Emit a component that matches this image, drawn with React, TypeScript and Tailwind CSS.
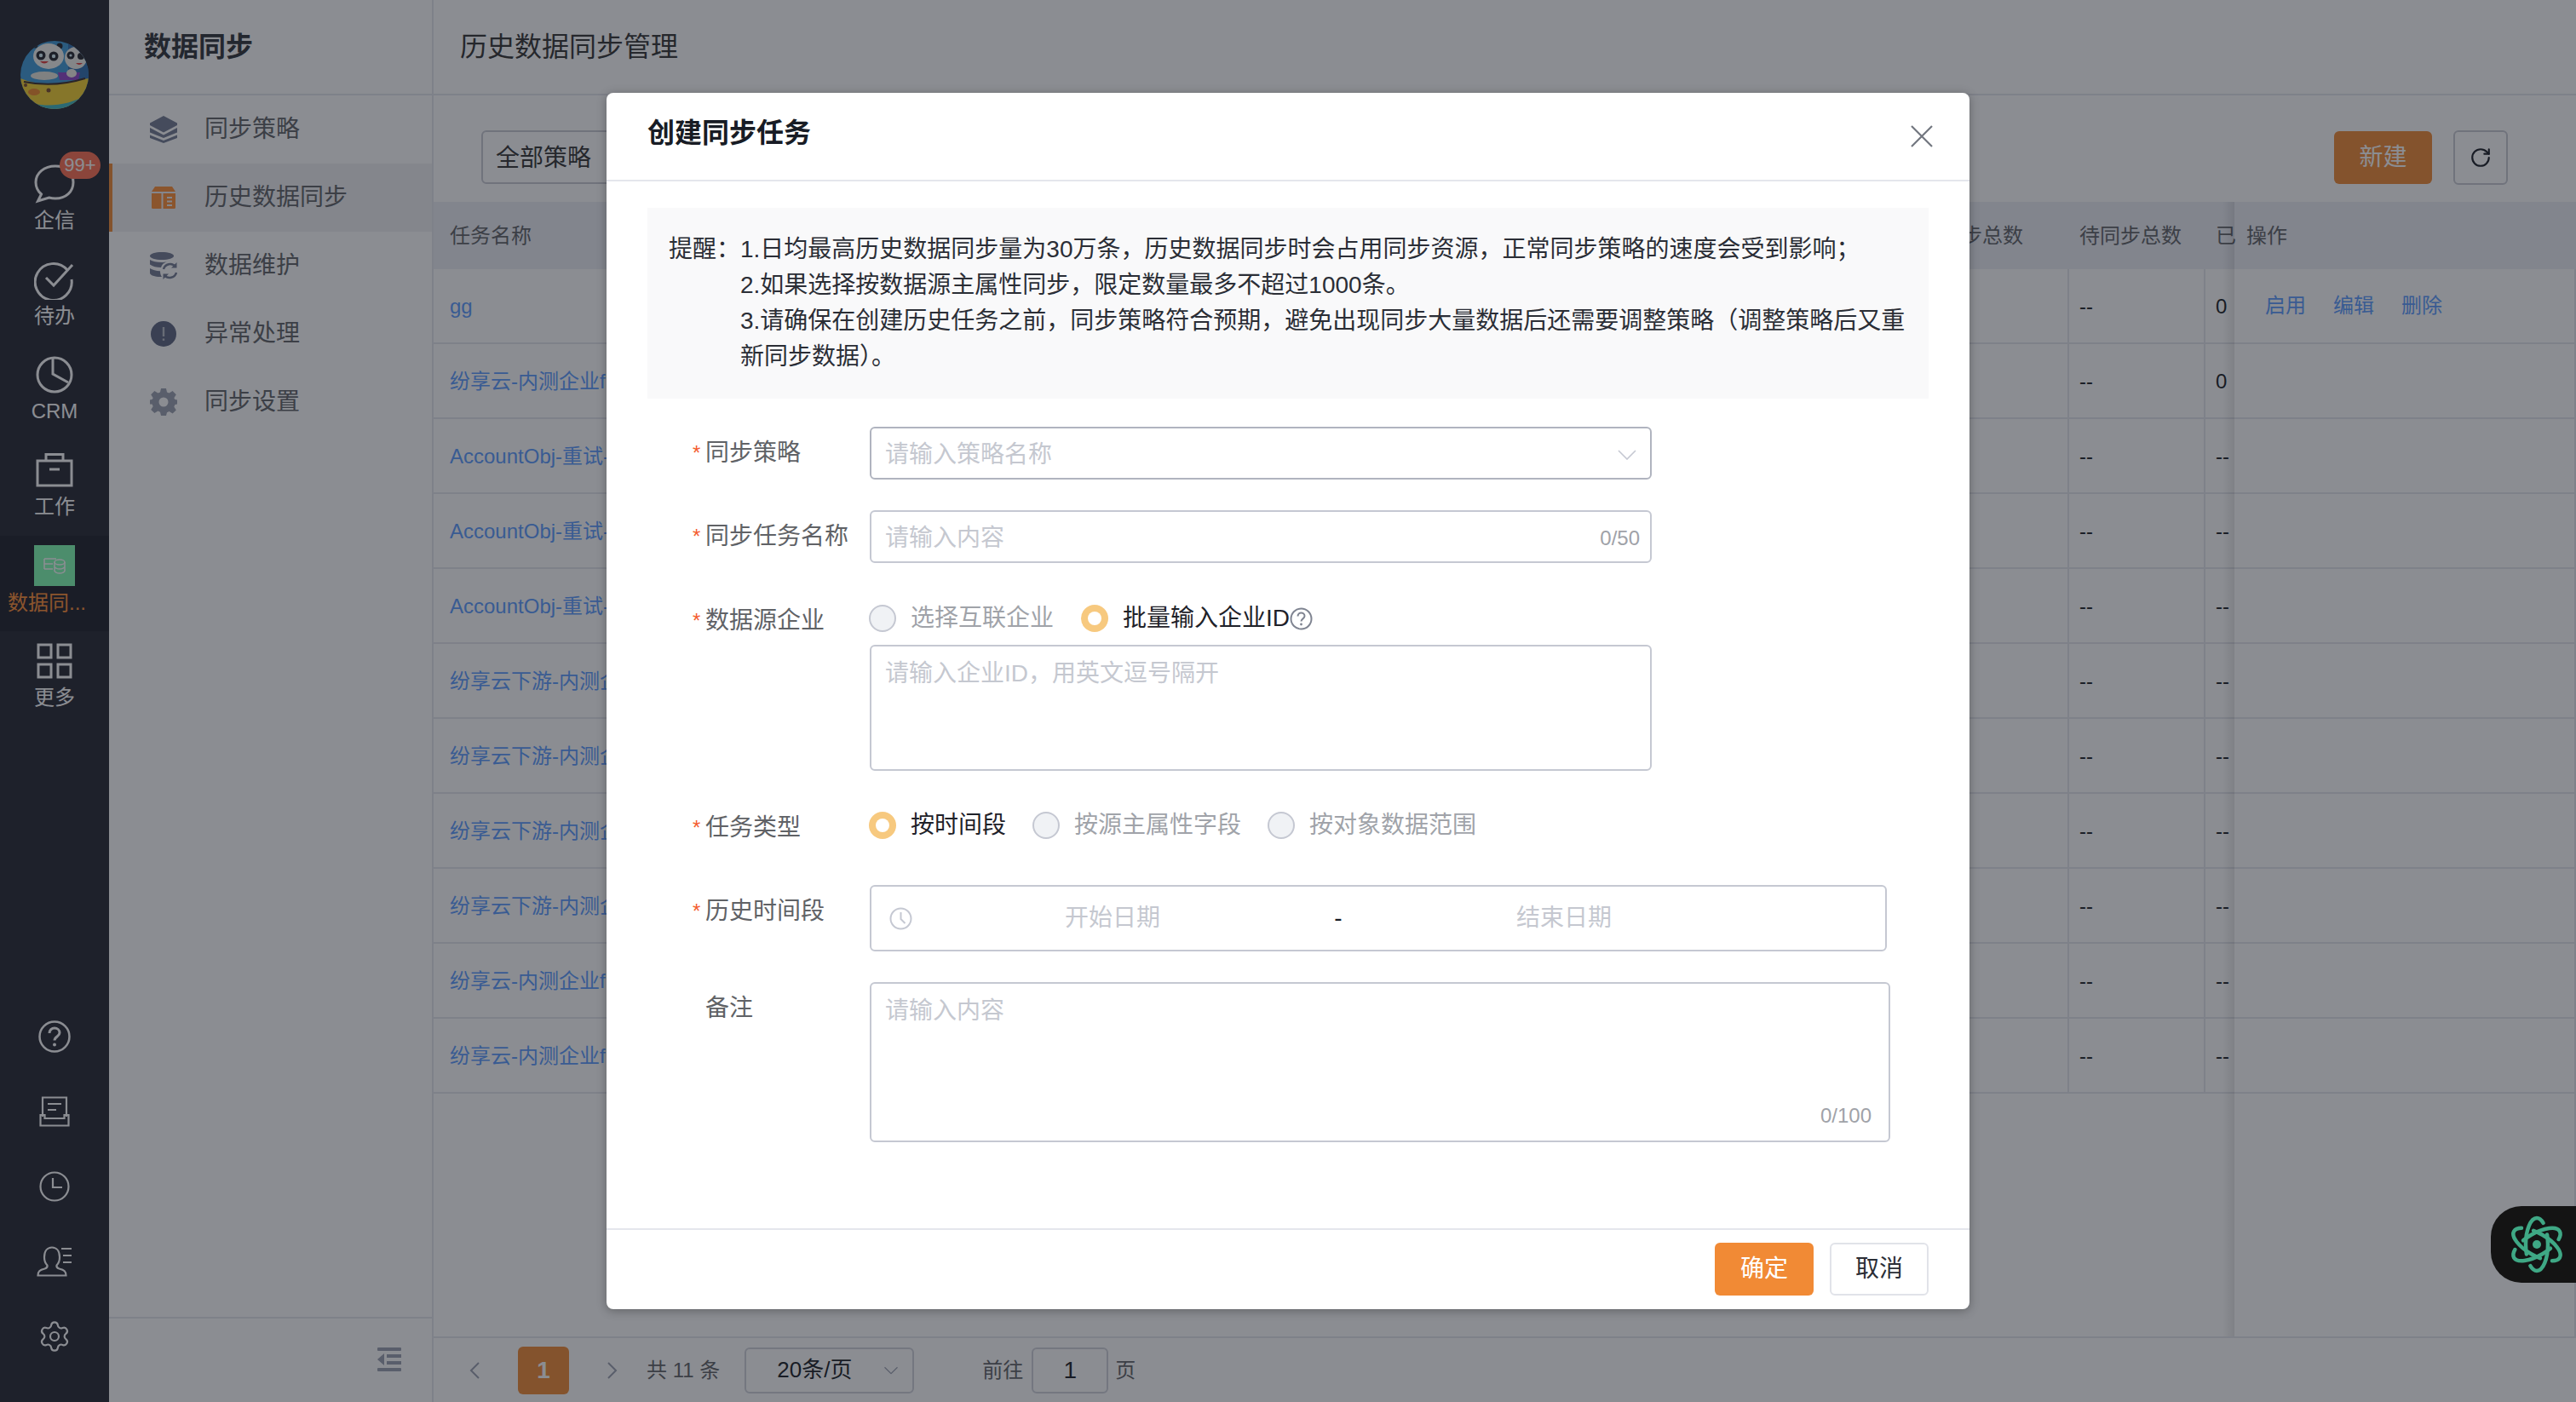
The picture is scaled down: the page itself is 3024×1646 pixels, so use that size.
import React from "react";
import { RotateCw, Settings } from "lucide-react";

const Avatar = () => (
  <svg width="80" height="80" viewBox="0 0 80 80" className="rounded-full">
    <rect width="80" height="80" fill="#3f9bd8" />
    <rect x="56" width="24" height="46" fill="#2f6fb0" />
    <path d="M0 44C14 50 30 52 44 50S68 46 80 44V80H0Z" fill="#f4d12f" />
    <path d="M0 68C20 78 50 80 80 62V80H0Z" fill="#3fb7c0" />
    <ellipse cx="16" cy="60" rx="7" ry="4" fill="#f08a2a" />
    <circle cx="33" cy="58" r="2.500" fill="#7a4a2a" />
    <circle cx="6" cy="52" r="2" fill="#7a4a2a" />
    <path d="M44 37h26l-2 9H46Z" fill="#8f44c8" />
    <path d="M4 48C24 52 50 52 76 44" stroke="#3a2c2a" strokeWidth="2" fill="none" />
    <ellipse cx="28" cy="41" rx="16" ry="5" fill="#e9e6dc" />
    <circle cx="17" cy="5" r="3.500" fill="#22252c" />
    <circle cx="46" cy="6" r="3.500" fill="#22252c" />
    <ellipse cx="33" cy="18" rx="18" ry="15" fill="#f5f5f0" />
    <ellipse cx="65" cy="20" rx="13" ry="13" fill="#f0f0ea" />
    <circle cx="24" cy="17" r="5.500" fill="#22252c" />
    <circle cx="39" cy="18" r="5.500" fill="#22252c" />
    <circle cx="24" cy="17" r="2.200" fill="#d8f0f8" />
    <circle cx="39" cy="18" r="2.200" fill="#d8f0f8" />
    <circle cx="59" cy="17" r="4.500" fill="#22252c" />
    <circle cx="71" cy="18" r="4" fill="#22252c" />
    <circle cx="59" cy="17" r="1.600" fill="#d8f0f8" />
    <path d="M23 24q5 5 10 0z" fill="#e03a3a" />
    <path d="M65 26q4 4 8 0z" fill="#e03a3a" />
    <ellipse cx="60" cy="38" rx="6" ry="5" fill="#f2efe6" />
  </svg>
);

const ChatIcon = () => (
  <svg width="48" height="46" viewBox="0 0 48 46" fill="none" stroke="white" strokeWidth="3">
    <path d="M25 2C12 2 2 10 2 21c0 6 2.500 10.500 6.500 14L4.500 43l13-4c2.300.6 5 1 7.500 1 12.500 0 21-8 21-19S37.500 2 25 2Z" />
  </svg>
);
const TodoIcon = () => (
  <svg width="48" height="48" viewBox="0 0 48 48" fill="none" stroke="white" strokeWidth="3">
    <path d="M39 13A21.500 21.500 0 1 0 44 24" />
    <path d="M14 22l9 9L45 7" />
  </svg>
);
const CrmIcon = () => (
  <svg width="44" height="44" viewBox="0 0 44 44" fill="none" stroke="white" strokeWidth="3">
    <circle cx="22" cy="22" r="20" />
    <path d="M20 3v18l18 10" />
  </svg>
);
const WorkIcon = () => (
  <svg width="44" height="42" viewBox="0 0 44 42" fill="none" stroke="white" strokeWidth="3">
    <rect x="2" y="10" width="40" height="29" />
    <path d="M12 10V2.500h20V10" />
    <path d="M16 20h12" />
  </svg>
);
const GridIcon = () => (
  <svg width="42" height="42" viewBox="0 0 42 42" fill="none" stroke="white" strokeWidth="3">
    <rect x="2" y="2" width="15" height="15" />
    <rect x="25" y="2" width="15" height="15" />
    <rect x="2" y="25" width="15" height="15" />
    <rect x="25" y="25" width="15" height="15" />
  </svg>
);
const DbActiveIcon = () => (
  <svg width="26" height="20" viewBox="0 0 26 20" fill="none" stroke="white" strokeWidth="1.500">
    <path d="M1 2h14M1 8h10M1 14h10M1 2v12" />
    <ellipse cx="19" cy="6" rx="6" ry="3" />
    <path d="M13 6v10c0 1.500 3 3 6 3s6-1.500 6-3V6M13 11c0 1.500 3 3 6 3s6-1.500 6-3" />
  </svg>
);
const HelpIcon = () => (
  <svg width="38" height="38" viewBox="0 0 38 38" fill="none" stroke="white" strokeWidth="2.500">
    <circle cx="19" cy="19" r="17.500" />
    <path d="M13 15c0-3.500 2.800-6 6-6s6 2.300 6 5.500c0 4.500-6 4.500-6 9" strokeWidth="3" />
    <circle cx="19" cy="28.500" r="2" fill="white" stroke="none" />
  </svg>
);
const InboxIcon = () => (
  <svg width="36" height="36" viewBox="0 0 36 36" fill="none" stroke="white" strokeWidth="2.200">
    <path d="M4 24V1.500h28V24" />
    <path d="M1.500 22v12.500h33V22h-5v4h-23v-4z" />
    <path d="M10 9h16M10 16h10" />
  </svg>
);
const ClockIcon = () => (
  <svg width="36" height="36" viewBox="0 0 36 36" fill="none" stroke="white" strokeWidth="2.200">
    <circle cx="18" cy="18" r="16.500" />
    <path d="M16 8v11h11" />
  </svg>
);
const UserListIcon = () => (
  <svg width="42" height="36" viewBox="0 0 42 36" fill="none" stroke="white" strokeWidth="2.200">
    <path d="M1.500 34.500c0-5 2-6.500 8-8 2.500-.8 3.500-2 3-4-2-2-3.500-5-3.500-9.500C9 6 12.500 1.500 18 1.500S27 6 27 13c0 4.500-1.500 7.500-3.500 9.500-.5 2 .5 3.200 3 4 6 1.500 8 3 8 8z" />
    <path d="M29 3h12M31 11h10M31 19h10" />
  </svg>
);
const LayersIcon = () => (
  <svg width="32" height="32" viewBox="0 0 32 32" fill="#727a93">
    <path d="M16 0L32 8.500v2.500L16 19.500 0 11V8.500z" />
    <path d="M0 14l16 8.500L32 14v5.500L16 26 0 19.500z" />
    <path d="M0 22.500L16 29l16-6.500V26l-16 6L0 26z" />
  </svg>
);
const BookIcon = () => (
  <svg width="28" height="26" viewBox="0 0 28 26" fill="#ff8e35">
    <path d="M4 0h20l4 6H0z" />
    <path d="M0 8h11.500v18H1.500A1.500 1.500 0 0 1 0 24.500z" />
    <path fillRule="evenodd" d="M13.500 8H28v16.500a1.500 1.500 0 0 1-1.500 1.500h-13zM18 12v2h6v-2zm0 4.500v2h6v-2zm0 4.500v2h6v-2z" />
  </svg>
);
const DbSyncIcon = () => (
  <svg width="32" height="32" viewBox="0 0 32 32" fill="none">
    <path d="M0 4.500C0 2 6 0 14 0s14 2 14 4.500S22 9 14 9 0 7 0 4.500z" fill="#727a93" />
    <path d="M0 9c3 2 8 3 14 3 2 0 5-.3 6-.5-4 1-6 3-7 6.500-5 0-10-1-13-3.500z" fill="#727a93" />
    <path d="M0 19c3 2 7 3 12 3.300 0 2.500.6 5 2 6.700-6.500.5-14-1.500-14-4.500z" fill="#727a93" />
    <path d="M16 20a8 8 0 0 1 14-3M31 24a8 8 0 0 1-14 3" stroke="#727a93" strokeWidth="2.500" />
    <path d="M31.500 12v6.500H25zM15.500 32v-6.500H22z" fill="#727a93" />
  </svg>
);
const AlertIcon = () => (
  <svg width="30" height="30" viewBox="0 0 30 30">
    <circle cx="15" cy="15" r="15" fill="#5c6480" />
    <rect x="13.800" y="7" width="2.400" height="11" fill="#b9bcc6" />
    <rect x="13.800" y="20.500" width="2.400" height="2.400" fill="#b9bcc6" />
  </svg>
);
const GearFilled = () => (
  <svg width="32" height="32" viewBox="0 0 32 32">
    <path
      fillRule="evenodd"
      fill="#9ba0b0"
      d="M13 0h6l1 4.500 2.600 1.100 4-2.500 4.200 4.200-2.500 4L29.500 13 32 13.500v5l-2.500.5-1.200 2.400 2.500 4-4.200 4.200-4-2.500-2.600 1.100L19 32h-6l-1-4.300-2.600-1.100-4 2.500-4.200-4.200 2.500-4L2.500 18.500 0 18.500v-5l2.500-.5 1.200-1.700-2.500-4 4.200-4.200 4 2.500L12 4.500zM16 10.500a5.500 5.500 0 1 0 0 11 5.500 5.500 0 0 0 0-11z"
    />
  </svg>
);
const CollapseIcon = () => (
  <svg width="28" height="28" viewBox="0 0 28 28" fill="#9ba0b0">
    <rect width="28" height="4" rx="1" />
    <rect x="11" y="8" width="17" height="4" />
    <rect x="11" y="16" width="17" height="4" />
    <rect y="24" width="28" height="4" rx="1" />
    <path d="M8 7v14L0 14z" />
  </svg>
);
const Chevron = ({ className }: { className: string }) => (
  <svg width="22" height="12" viewBox="0 0 22 12" fill="none" stroke="currentColor" strokeWidth="1.600" className={className}>
    <path d="M1 1l10 10L21 1" />
  </svg>
);
const AtomIcon = () => (
  <svg width="64" height="68" viewBox="-32 -34 64 68" fill="none" stroke="#3fa885" strokeWidth="4.500" strokeLinecap="round">
    <ellipse rx="13" ry="31" pathLength="100" strokeDasharray="40 10" strokeDashoffset="8" />
    <ellipse rx="13" ry="31" pathLength="100" strokeDasharray="40 10" strokeDashoffset="8" transform="rotate(60)" />
    <ellipse rx="13" ry="31" pathLength="100" strokeDasharray="40 10" strokeDashoffset="8" transform="rotate(120)" />
    <circle r="5" fill="#3fa885" stroke="none" />
  </svg>
);

const rail = [
  { label: "企信", icon: <ChatIcon /> },
  { label: "待办", icon: <TodoIcon /> },
  { label: "CRM", icon: <CrmIcon /> },
  { label: "工作", icon: <WorkIcon /> },
];

const menu = [
  { label: "同步策略", icon: <LayersIcon /> },
  { label: "历史数据同步", icon: <BookIcon />, active: true },
  { label: "数据维护", icon: <DbSyncIcon /> },
  { label: "异常处理", icon: <AlertIcon /> },
  { label: "同步设置", icon: <GearFilled /> },
];

const rows = [
  { name: "gg", done: "0", actions: true },
  { name: "纷享云-内测企业f", done: "0" },
  { name: "AccountObj-重试-", done: "--" },
  { name: "AccountObj-重试-", done: "--" },
  { name: "AccountObj-重试-", done: "--" },
  { name: "纷享云下游-内测企业", done: "--" },
  { name: "纷享云下游-内测企业", done: "--" },
  { name: "纷享云下游-内测企业", done: "--" },
  { name: "纷享云下游-内测企业", done: "--" },
  { name: "纷享云-内测企业f", done: "--" },
  { name: "纷享云-内测企业f", done: "--" },
];

const Label = ({ text, required = true, radio = false }: { text: string; required?: boolean; radio?: boolean }) => (
  <div className={`w-[261px] shrink-0 pl-[53px] flex text-[28px] text-[#606266] ${radio ? "h-[32px] leading-[38px]" : "leading-[62px]"}`}>
    <span className="w-[15px] shrink-0 text-[#f45d30] text-[24px]">{required ? "*" : ""}</span>
    <span className="whitespace-nowrap">{text}</span>
  </div>
);

const Radio = ({ text, checked = false, className = "" }: { text: string; checked?: boolean; className?: string }) => (
  <div className={`flex items-center ${className}`}>
    {checked ? (
      <span className="w-[32px] h-[32px] rounded-full bg-[#f7c97f] flex items-center justify-center">
        <span className="w-[16px] h-[16px] rounded-full bg-white" />
      </span>
    ) : (
      <span className="w-[32px] h-[32px] rounded-full bg-[#f0f2f5] border-2 border-[#c5c8d2]" />
    )}
    <span className={`ml-[17px] text-[28px] leading-[32px] whitespace-nowrap ${checked ? "text-[#1f2229]" : "text-[#a0a3a9]"}`}>{text}</span>
  </div>
);

export default function App() {
  return (
    <div className="relative w-screen h-screen overflow-hidden flex bg-white font-['Liberation_Sans','Noto_Sans_CJK_SC',sans-serif]">
      {/* rail */}
      <aside className="w-[128px] shrink-0 bg-[#242631] flex flex-col text-white">
        <div className="pl-[24px] pt-[48px] h-[181px]">
          <Avatar />
        </div>
        {rail.map((r, i) => (
          <div key={r.label} className="relative h-[112px] pt-[12px] flex flex-col items-center">
            <div className="h-[46px] flex items-center justify-center">{r.icon}</div>
            <div className="text-[24px] leading-[40px] whitespace-nowrap">{r.label}</div>
            {i === 0 && (
              <span className="absolute left-[70px] top-[-3px] w-[48px] h-[32px] rounded-full bg-[#ff6f50] text-[22px] leading-[32px] text-center">
                99+
              </span>
            )}
          </div>
        ))}
        <div className="h-[112px] pt-[11px] bg-[#1c1e28] flex flex-col">
          <div className="mx-auto w-[48px] h-[48px] bg-[#80ffb3] flex items-center justify-center">
            <DbActiveIcon />
          </div>
          <div className="pl-[9px] text-[24px] leading-[40px] text-[#ff8e35] whitespace-nowrap">数据同...</div>
        </div>
        <div className="h-[112px] pt-[12px] flex flex-col items-center">
          <div className="h-[46px] flex items-center justify-center">
            <GridIcon />
          </div>
          <div className="text-[24px] leading-[40px]">更多</div>
        </div>
        <div className="mt-auto pb-[33px] flex flex-col items-center">
          <div className="h-[88px] flex items-center"><HelpIcon /></div>
          <div className="h-[88px] flex items-center"><InboxIcon /></div>
          <div className="h-[88px] flex items-center"><ClockIcon /></div>
          <div className="h-[88px] flex items-center"><UserListIcon /></div>
          <div className="h-[88px] flex items-center"><Settings size={40} strokeWidth={1.3} /></div>
        </div>
      </aside>

      {/* secondary menu */}
      <nav className="w-[381px] shrink-0 border-r-2 border-[#e4e6ec] flex flex-col">
        <div className="h-[112px] border-b-2 border-[#e4e6ec] pl-[41px] flex items-center text-[32px] leading-[108px] font-bold text-[#2f3238]">
          数据同步
        </div>
        <div className="flex-1">
          {menu.map((m) => (
            <div
              key={m.label}
              className={`h-[80px] flex items-center border-l-4 ${m.active ? "border-[#f18a35] bg-[#f0f0f3]" : "border-transparent"}`}
            >
              <div className="w-[108px] pl-[44px] flex items-center">
                <div className="w-[32px] flex justify-center">{m.icon}</div>
              </div>
              <span className="text-[28px] text-[#606266] leading-[76px]">{m.label}</span>
            </div>
          ))}
        </div>
        <div className="h-[100px] border-t-2 border-[#e4e6ec] flex justify-end pr-[36px] pt-[34px]">
          <CollapseIcon />
        </div>
      </nav>

      {/* main */}
      <main className="flex-1 min-w-0 flex flex-col">
        <div className="h-[112px] shrink-0 border-b-2 border-[#e4e6ec] pl-[31px] flex items-center text-[32px] text-[#333] leading-[108px]">
          历史数据同步管理
        </div>
        <div className="h-[125px] shrink-0 flex items-start justify-between pt-[41px] pl-[56px] pr-[80px]">
          <div className="w-[300px] h-[63px] border-2 border-[#c8cad2] rounded-md pl-[15px] pt-[2px] flex items-center text-[28px] text-[#333]">全部策略</div>
          <div className="flex items-center gap-[25px]">
            <button className="w-[115px] h-[62px] bg-[#f18a35] rounded-md text-[28px] text-white">新建</button>
            <button className="w-[64px] h-[64px] border-2 border-[#c8cad2] rounded-md flex items-center justify-center text-[#181c25]">
              <RotateCw size={26} strokeWidth={2} />
            </button>
          </div>
        </div>

        <div className="relative flex-1 min-h-0 flex flex-col">
          <div className="grid grid-cols-[1732px_186px_160px_36px_401px] h-[79px] bg-[#eceef5] text-[24px] text-[#606266] items-center shrink-0">
            <div className="pl-[19px]">任务名称</div>
            <div className="pl-[14px] whitespace-nowrap">已同步总数</div>
            <div className="pl-[14px] whitespace-nowrap">待同步总数</div>
            <div className="pl-[14px]">已</div>
            <div className="pl-[14px]">操作</div>
          </div>
          {rows.map((r, i) => (
            <div key={i} className="grid grid-cols-[1732px_186px_160px_36px_401px] h-[88px] border-b-2 border-[#e4e6ec] text-[24px] text-[#181c25] shrink-0">
              <div className="pl-[19px] pt-[2px] flex items-center text-[#5a9bff] whitespace-nowrap">{r.name}</div>
              <div />
              <div className="border-l-2 border-[#e4e6ec] pl-[12px] pt-[2px] flex items-center">--</div>
              <div className="border-l-2 border-[#e4e6ec] pl-[12px] pt-[2px] flex items-center">{r.done}</div>
              <div className="pl-[36px] flex items-center gap-[32px] text-[#5a9bff] border-r-2 border-[#e4e6ec]">
                {r.actions && (
                  <>
                    <span>启用</span>
                    <span>编辑</span>
                    <span>删除</span>
                  </>
                )}
              </div>
            </div>
          ))}
          <div className="absolute top-0 bottom-0 right-[401px] w-[14px] bg-linear-to-l from-black/10 to-transparent" />
          <div className="absolute top-[79px] bottom-0 right-0 w-[2px] bg-[#e4e6ec]" />
        </div>

        <div className="h-[77px] shrink-0 border-t-2 border-[#e4e6ec] flex items-center text-[24px] text-[#606266]">
          <svg width="12" height="20" viewBox="0 0 12 20" fill="none" stroke="#9ba0b0" strokeWidth="2" className="ml-[42px]">
            <path d="M11 1L2 10l9 9" />
          </svg>
          <div className="ml-[45px] w-[60px] h-[56px] rounded-md bg-[#f18a35] text-white font-bold text-[28px] flex items-center justify-center">1</div>
          <svg width="12" height="20" viewBox="0 0 12 20" fill="none" stroke="#9ba0b0" strokeWidth="2" className="ml-[45px]">
            <path d="M1 1l9 9-9 9" />
          </svg>
          <span className="ml-[34px] whitespace-nowrap">共 11 条</span>
          <div className="ml-[29px] w-[199px] h-[54px] border-2 border-[#d0d2da] rounded-md pl-[36px] flex items-center text-[26px] text-[#181c25] relative">
            20条/页
            <Chevron className="absolute right-[14px] top-[19px] text-[#9ba0b0] scale-75" />
          </div>
          <span className="ml-[80px]">前往</span>
          <div className="ml-[10px] w-[90px] h-[54px] border-2 border-[#d0d2da] rounded-md flex items-center justify-center text-[28px] text-[#181c25]">1</div>
          <span className="ml-[8px]">页</span>
        </div>
      </main>

      {/* mask */}
      <div className="absolute inset-0 z-10 bg-[rgba(24,28,37,0.5)]" />

      {/* dialog */}
      <div className="absolute z-20 left-[712px] top-[109px] w-[1600px] h-[1428px] bg-white rounded-lg shadow-[0_2px_12px_rgba(0,0,0,0.3)] flex flex-col">
        <div className="h-[104px] shrink-0 border-b-2 border-[#e4e6ec] flex justify-between pl-[48px] pr-[43px]">
          <div className="pt-[17px] text-[32px] leading-[60px] font-bold text-[#181c25]">创建同步任务</div>
          <svg width="26" height="26" viewBox="0 0 26 26" fill="none" stroke="#72767f" strokeWidth="2.200" className="mt-[38px]">
            <path d="M1 1l24 24M25 1L1 25" />
          </svg>
        </div>

        <div className="flex-1 min-h-0 px-[48px] pt-[31px]">
          <div className="h-[224px] bg-[#f9f9fa] py-[28px] pl-[25px] pr-[24px] flex text-[28px] leading-[42px] text-[#2b2e36]">
            <span className="w-[84px] shrink-0">提醒：</span>
            <div>
              <p className="whitespace-nowrap">1.日均最高历史数据同步量为30万条，历史数据同步时会占用同步资源，正常同步策略的速度会受到影响；</p>
              <p>2.如果选择按数据源主属性同步，限定数量最多不超过1000条。</p>
              <p>3.请确保在创建历史任务之前，同步策略符合预期，避免出现同步大量数据后还需要调整策略（调整策略后又重新同步数据）。</p>
            </div>
          </div>

          <div className="flex mt-[33px]">
            <Label text="同步策略" />
            <div className="relative w-[918px] h-[62px] border-2 border-[#b0b4bf] rounded-md pl-[16px] pt-[3px] flex items-center text-[28px] text-[#c5c8d0]">
              请输入策略名称
              <Chevron className="absolute right-[16px] top-[25px] text-[#c5c8d2]" />
            </div>
          </div>

          <div className="flex mt-[36px]">
            <Label text="同步任务名称" />
            <div className="w-[918px] h-[62px] border-2 border-[#c5c8d2] rounded-md pl-[16px] pr-[12px] pt-[3px] flex items-center justify-between text-[28px] text-[#c5c8d0]">
              <span>请输入内容</span>
              <span className="text-[24px] text-[#a0a2a8]">0/50</span>
            </div>
          </div>

          <div className="flex mt-[49px]">
            <Label text="数据源企业" radio />
            <div className="flex flex-col">
              <div className="flex items-center h-[32px] -ml-[1px]">
                <Radio text="选择互联企业" />
                <Radio text="批量输入企业ID" checked className="ml-[32px]" />
                <svg width="27" height="27" viewBox="0 0 27 27" fill="none" stroke="#7f8491" strokeWidth="2">
                  <circle cx="13.500" cy="13.500" r="12" />
                  <path d="M9.500 10.500c0-2.500 2-4 4-4s4 1.500 4 3.800c0 3-4 3.200-4 6.200" />
                  <circle cx="13.500" cy="20" r="1.400" fill="#7f8491" stroke="none" />
                </svg>
              </div>
              <div className="mt-[15px] w-[918px] h-[148px] border-2 border-[#c5c8d2] rounded-md pl-[16px] pt-[12px] text-[28px] leading-[40px] text-[#c5c8d0]">
                请输入企业ID，用英文逗号隔开
              </div>
            </div>
          </div>

          <div className="flex mt-[48px]">
            <Label text="任务类型" radio />
            <div className="flex items-center h-[32px] -ml-[1px]">
              <Radio text="按时间段" checked />
              <Radio text="按源主属性字段" className="ml-[31px]" />
              <Radio text="按对象数据范围" className="ml-[31px]" />
            </div>
          </div>

          <div className="flex mt-[54px]">
            <Label text="历史时间段" />
            <div className="relative w-[1194px] h-[78px] border-2 border-[#c5c8d2] rounded-md pl-[28px] flex items-center text-[28px] text-[#c5c8d0]">
              <svg width="27" height="27" viewBox="0 0 27 27" fill="none" stroke="#c5c8d2" strokeWidth="2" className="absolute left-[21px] top-[24px]">
                <circle cx="13.500" cy="13.500" r="12" />
                <path d="M13.500 6v8l5 5" />
              </svg>
              <span className="w-[510px] text-center">开始日期</span>
              <span className="w-[20px] text-center text-[#181c25]">-</span>
              <span className="w-[510px] text-center">结束日期</span>
            </div>
          </div>

          <div className="flex mt-[36px]">
            <Label text="备注" required={false} />
            <div className="relative w-[1198px] h-[188px] border-2 border-[#c5c8d2] rounded-md pl-[16px] pt-[12px] text-[28px] leading-[40px] text-[#c5c8d0]">
              请输入内容
              <span className="absolute right-[20px] bottom-[14px] text-[24px] leading-[30px] text-[#a0a2a8]">0/100</span>
            </div>
          </div>
        </div>

        <div className="h-[95px] shrink-0 border-t-2 border-[#e4e6ec] flex justify-end items-start pt-[15px] pr-[48px] gap-[19px]">
          <button className="w-[116px] h-[62px] rounded-md bg-[#f18a35] text-[28px] text-white">确定</button>
          <button className="w-[116px] h-[62px] rounded-md border-2 border-[#e1e3e9] bg-white text-[28px] text-[#2b2e36]">取消</button>
        </div>
      </div>

      {/* floating assistant */}
      <div className="absolute z-30 right-0 top-[1416px] w-[100px] h-[90px] bg-[#141414] rounded-l-[36px] flex items-center pl-[22px]">
        <AtomIcon />
      </div>
    </div>
  );
}
